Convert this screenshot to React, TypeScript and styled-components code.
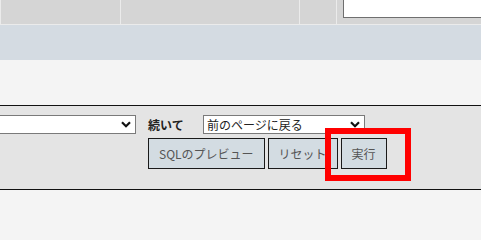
import React from 'react';
import styled, { createGlobalStyle } from 'styled-components';

const GlobalStyle = createGlobalStyle`
  html, body {
    margin: 0;
    padding: 0;
    background: #f4f4f4;
    font-family: "Noto Sans CJK JP", "Noto Sans", sans-serif;
    overflow: hidden;
  }
  * {
    box-sizing: border-box;
  }
`;

const Page = styled.div`
  width: 481px;
  height: 218px;
  overflow: hidden;
  background: #f4f4f4;
`;

const TableRow = styled.div`
  display: flex;
  height: 25px;
  background: #d5d5d5;
  border-bottom: 1px solid #ebebeb;
  border-left: 1px solid #ebebeb;
  overflow: hidden;
`;

const Cell = styled.div<{ $width?: number }>`
  flex: ${(p) => (p.$width ? `0 0 ${p.$width}px` : '1 1 auto')};
  border-right: 1px solid #ebebeb;
  overflow: hidden;

  &:last-child {
    border-right: none;
  }
`;

const TextInput = styled.div`
  width: 200px;
  height: 30px;
  margin: -12px 0 0 6px;
  background: #fff;
  border: 1px solid #6f6f6f;
`;

const Band = styled.div`
  height: 35px;
  background: #d4dbe2;
`;

const Spacer = styled.div`
  height: 45px;
`;

const Panel = styled.div`
  display: flex;
  align-items: flex-start;
  gap: 12px;
  height: 85px;
  padding-top: 9px;
  background: #e4e4e4;
  border-top: 1px solid #111;
  border-bottom: 1px solid #111;
`;

const SelectBox = styled.div<{ $width: number }>`
  display: flex;
  align-items: center;
  justify-content: space-between;
  width: ${(p) => p.$width}px;
  height: 19px;
  padding: 0 4px 0 3px;
  background: #fff;
  border: 1px solid #7a7a7a;
  font-size: 12px;
  color: #222;
  white-space: nowrap;
`;

const FirstSelect = styled(SelectBox)`
  margin-left: -10px;
`;

const Controls = styled.div`
  display: flex;
  flex-direction: column;
  gap: 4px;
`;

const ControlRow = styled.div`
  display: flex;
  align-items: center;
`;

const Label = styled.span`
  width: 55px;
  font-size: 12px;
  font-weight: bold;
  color: #222;
`;

const ButtonRow = styled.div`
  display: flex;
  gap: 3px;
`;

const Button = styled.button`
  height: 31px;
  padding: 0 10px;
  background: #d3dce2;
  border: 1px solid #1a1a1a;
  border-radius: 0;
  font-family: inherit;
  font-size: 12px;
  color: #555;
  cursor: pointer;
`;

const Highlighted = styled.div`
  position: relative;
  display: flex;
`;

const RedMark = styled.div`
  position: absolute;
  left: -16px;
  top: -10px;
  width: 86px;
  height: 53px;
  border: 6px solid #ff0000;
  pointer-events: none;
`;

const Chevron = () => (
  <svg width="10" height="7" viewBox="0 0 10 7">
    <path d="M1 1.2 L5 5.2 L9 1.2" fill="none" stroke="#111" strokeWidth="2.2" />
  </svg>
);

export default function App() {
  return (
    <Page>
      <GlobalStyle />
      <TableRow>
        <Cell $width={120} />
        <Cell $width={179} />
        <Cell $width={37} />
        <Cell>
          <TextInput />
        </Cell>
      </TableRow>
      <Band />
      <Spacer />
      <Panel>
        <FirstSelect $width={146}>
          <span />
          <Chevron />
        </FirstSelect>
        <Controls>
          <ControlRow>
            <Label>続いて</Label>
            <SelectBox $width={162}>
              <span>前のページに戻る</span>
              <Chevron />
            </SelectBox>
          </ControlRow>
          <ButtonRow>
            <Button>SQLのプレビュー</Button>
            <Button>リセット</Button>
            <Highlighted>
              <Button>実行</Button>
              <RedMark />
            </Highlighted>
          </ButtonRow>
        </Controls>
      </Panel>
    </Page>
  );
}
